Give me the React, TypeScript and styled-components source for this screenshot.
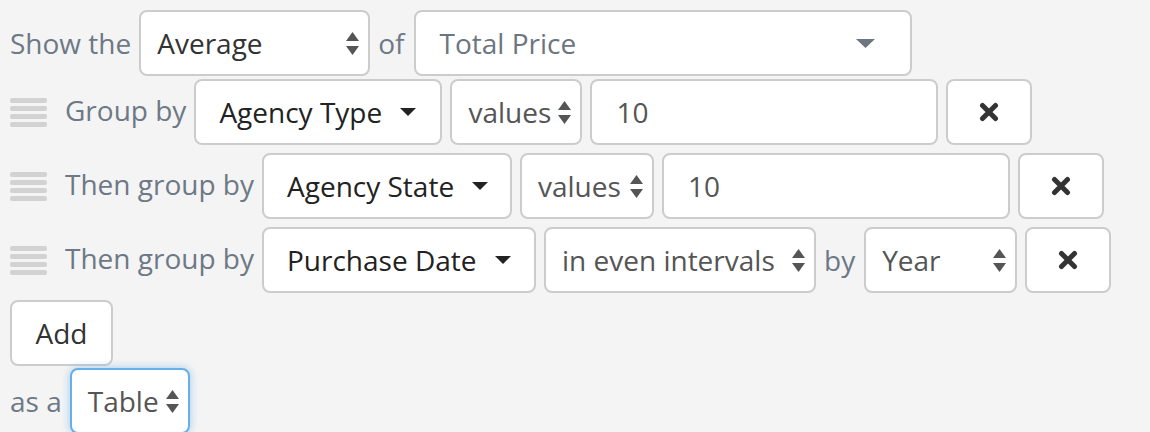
import React from 'react';
import styled, { createGlobalStyle } from 'styled-components';

const GlobalStyle = createGlobalStyle`
  html, body {
    margin: 0;
    padding: 0;
    background: #f4f4f4;
  }
  body {
    font-family: "Open Sans", "Noto Sans", sans-serif;
  }
`;

const Form = styled.div`
  display: flex;
  flex-direction: column;
  padding: 10px 0 0 10px;
`;

const Row = styled.div<{ $top?: number }>`
  display: flex;
  align-items: center;
  gap: 8px;
  margin-top: ${(p) => p.$top ?? 0}px;
`;

const Label = styled.span<{ $shift?: number; $pad?: number }>`
  font-size: 28px;
  color: #6d7986;
  white-space: nowrap;
  position: relative;
  top: ${(p) => p.$shift ?? 0}px;
  padding-right: ${(p) => p.$pad ?? 0}px;
`;

const Handle = styled.div`
  display: flex;
  flex-direction: column;
  gap: 3px;
  width: 37px;
  margin-right: 10px;

  span {
    display: block;
    height: 5px;
    border-radius: 2px;
    background: #d2d2d2;
  }
`;

const Box = styled.div<{ $w: number }>`
  box-sizing: border-box;
  width: ${(p) => p.$w}px;
  height: 66px;
  flex: none;
  display: flex;
  align-items: center;
  background: #fff;
  border: 2px solid #cccccc;
  border-radius: 8px;
  font-size: 28px;
  white-space: nowrap;
`;

const SelectBox = styled(Box)<{ $focus?: boolean; $dark?: boolean }>`
  justify-content: space-between;
  padding: 0 9px 0 16px;
  color: ${(p) => (p.$dark ? '#333' : '#555')};
  ${(p) =>
    p.$focus &&
    `
    border-color: #66afe9;
    box-shadow: 0 0 8px rgba(102, 175, 233, 0.6);
  `}
`;

const DropBox = styled(Box)<{ $muted?: boolean; $right?: number }>`
  justify-content: ${(p) => (p.$muted ? 'space-between' : 'flex-start')};
  gap: 18px;
  padding: 0 ${(p) => p.$right ?? 24}px 0 23px;
  color: ${(p) => (p.$muted ? '#6c7580' : '#222')};
`;

const InputBox = styled(Box)`
  padding-left: 24px;
  color: #555;
`;

const RemoveButton = styled(Box)`
  justify-content: center;
  cursor: pointer;
`;

const AddButton = styled(Box)`
  justify-content: center;
  color: #333;
  cursor: pointer;
`;

const Arrows = () => (
  <svg width="13" height="23" viewBox="0 0 13 23">
    <path d="M6.5 0 L13 9 L0 9 Z" fill="#555" />
    <path d="M0 14 L13 14 L6.5 23 Z" fill="#555" />
  </svg>
);

const Caret = ({ w = 16, h = 8, color = '#222' }: { w?: number; h?: number; color?: string }) => (
  <svg width={w} height={h} viewBox={`0 0 ${w} ${h}`} style={{ flex: 'none' }}>
    <path d={`M0 0 L${w} 0 L${w / 2} ${h} Z`} fill={color} />
  </svg>
);

const Cross = () => (
  <svg width="20" height="20" viewBox="0 0 20 20">
    <path d="M3.5 3.5 L16.5 16.5 M16.5 3.5 L3.5 16.5" stroke="#333" strokeWidth="5" strokeLinecap="round" />
  </svg>
);

const DragHandle = () => (
  <Handle>
    <span />
    <span />
    <span />
    <span />
  </Handle>
);

type GroupRow = {
  label: string;
  field: string;
  fieldW: number;
  mode: string;
  modeW: number;
  top: number;
  value?: string;
  valueW?: number;
  unit?: string;
  unitW?: number;
};

const groups: GroupRow[] = [
  { label: 'Group by', field: 'Agency Type', fieldW: 248, mode: 'values', modeW: 132, value: '10', valueW: 348, top: 3 },
  { label: 'Then group by', field: 'Agency State', fieldW: 250, mode: 'values', modeW: 134, value: '10', valueW: 348, top: 8 },
  { label: 'Then group by', field: 'Purchase Date', fieldW: 274, mode: 'in even intervals', modeW: 272, unit: 'Year', unitW: 153, top: 8 },
];

export default function App() {
  return (
    <>
      <GlobalStyle />
      <Form>
        <Row>
          <Label>Show the</Label>
          <SelectBox $w={231} $dark>
            <span>Average</span>
            <Arrows />
          </SelectBox>
          <Label $pad={2}>of</Label>
          <DropBox $w={498} $muted $right={35}>
            <span>Total Price</span>
            <Caret w={19} h={9} color="#6c7580" />
          </DropBox>
        </Row>

        {groups.map((g, i) => (
          <Row key={i} $top={g.top}>
            <DragHandle />
            <Label $shift={-2}>{g.label}</Label>
            <DropBox $w={g.fieldW}>
              <span>{g.field}</span>
              <Caret />
            </DropBox>
            <SelectBox $w={g.modeW}>
              <span>{g.mode}</span>
              <Arrows />
            </SelectBox>
            {g.value !== undefined && <InputBox $w={g.valueW!}>{g.value}</InputBox>}
            {g.unit && (
              <>
                <Label $pad={1}>by</Label>
                <SelectBox $w={g.unitW!}>
                  <span>{g.unit}</span>
                  <Arrows />
                </SelectBox>
              </>
            )}
            <RemoveButton $w={86}>
              <Cross />
            </RemoveButton>
          </Row>
        ))}

        <Row $top={7}>
          <AddButton $w={103}>Add</AddButton>
        </Row>

        <Row $top={2}>
          <Label>as a</Label>
          <SelectBox $w={120} $focus>
            <span>Table</span>
            <Arrows />
          </SelectBox>
        </Row>
      </Form>
    </>
  );
}
